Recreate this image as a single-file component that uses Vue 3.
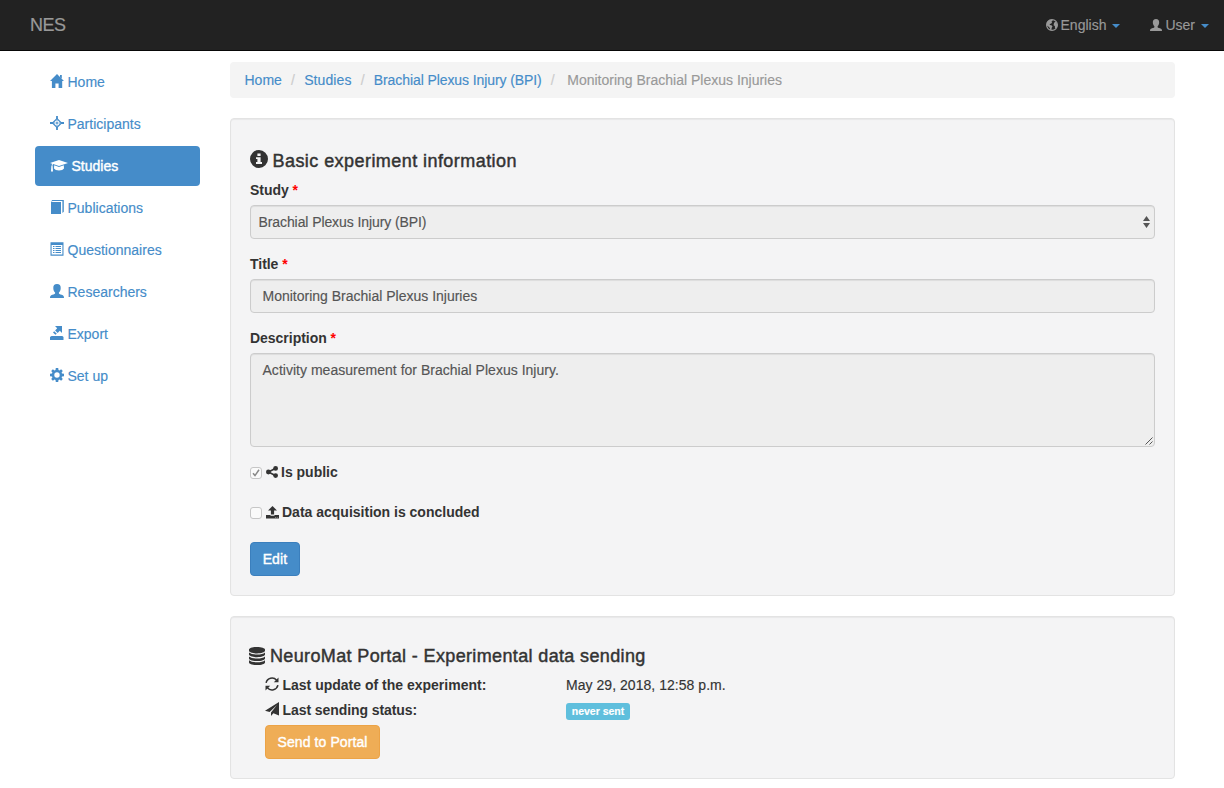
<script setup>
const nav = [
  { label: 'Home', icon: 'home' },
  { label: 'Participants', icon: 'target' },
  { label: 'Studies', icon: 'cap', active: true },
  { label: 'Publications', icon: 'book' },
  { label: 'Questionnaires', icon: 'list' },
  { label: 'Researchers', icon: 'user' },
  { label: 'Export', icon: 'export' },
  { label: 'Set up', icon: 'cog' },
]
</script>

<template>
  <svg class="defs" width="0" height="0" aria-hidden="true">
    <symbol id="home" viewBox="0 0 14 14"><path d="M7 0L14 7.1H12.2V14H8.6V9.4H5.4V14H1.9V7.1H0L7 0ZM10 1H11.8V4.6L10 2.9Z" /></symbol>
    <symbol id="target" viewBox="0 0 14 14"><path d="M6.1 0H7.9V3H6.1ZM6.1 11H7.9V14H6.1ZM0 6.1H3V7.9H0ZM11 6.1H14V7.9H11Z" /><path d="M7 2.6L11.4 7L7 11.4L2.6 7Z" fill="none" stroke="currentColor" stroke-width="1.3" /><path d="M7 4V5.6M7 8.4V10M4 7H5.6M8.4 7H10" fill="none" stroke="currentColor" stroke-width=".8" /><circle cx="7" cy="7" r="1" /></symbol>
    <symbol id="cap" viewBox="0 0 18 14"><path d="M9 1L18 4L9 7L3.1 5.1Q2.5 5.5 2.4 6.9Q3 7.3 2.7 8L3 12.5H1L1.3 8Q1 7.3 1.6 6.9Q1.7 5.5 2.1 4.7L0 4ZM4.2 6.3L9 8L13.8 6.3L14 9.6Q12.8 11.5 9 11.5T4 9.6Z" /></symbol>
    <symbol id="book" viewBox="0 0 14 14"><path d="M1 2H11V14H1ZM1 1.4L2.3 0H13.8V11.8L12.4 13V1.1H2.6L1.8 1.6Z" /></symbol>
    <symbol id="list" viewBox="0 0 14 14"><path d="M.5 .3H13.5V13.7H.5ZM1.6 3V12.6H12.4V3Z" fill-rule="evenodd" /><path d="M3 4.5H4.5M5.5 4.5H11M3 6.5H4.5M5.5 6.5H11M3 8.5H4.5M5.5 8.5H11M3 10.5H4.5M5.5 10.5H11" fill="none" stroke="currentColor" stroke-width="1" /></symbol>
    <symbol id="user" viewBox="0 0 14 14"><path d="M7 0C9.6 0 10.8 1.5 10.7 3.9C10.7 6 10 7.6 8.9 8.5V9.6C9.3 10.4 11.5 10.6 12.8 11.3C13.6 11.8 14 12.6 14 14H0C0 12.6 .4 11.8 1.2 11.3C2.5 10.6 4.7 10.4 5.1 9.6V8.5C4 7.6 3.3 6 3.3 3.9C3.2 1.5 4.4 0 7 0Z" /></symbol>
    <symbol id="export" viewBox="0 0 14 14"><path d="M5 0H12V7L9.8 4.8L7.7 6.9L5.1 4.4L7.2 2.2ZM4.2 5.2L6.8 7.8L5.4 8.8L3 6.6ZM1.5 9.9H12.3L13.5 11V14H0V11Z" /></symbol>
    <symbol id="cog" viewBox="0 0 14 14"><path fill-rule="evenodd" d="M5.8 0H8.2L8.5 2L9.5 2.4L11.1 1.2L12.8 2.9L11.6 4.5L12 5.5L14 5.8V8.2L12 8.5L11.6 9.5L12.8 11.1L11.1 12.8L9.5 11.6L8.5 12L8.2 14H5.8L5.5 12L4.5 11.6L2.9 12.8L1.2 11.1L2.4 9.5L2 8.5L0 8.2V5.8L2 5.5L2.4 4.5L1.2 2.9L2.9 1.2L4.5 2.4L5.5 2ZM7 4.3A2.7 2.7 0 1 0 7 9.7A2.7 2.7 0 1 0 7 4.3Z" /></symbol>
    <symbol id="globe" viewBox="0 0 14 14"><circle cx="7" cy="7" r="6.3" fill="none" stroke="currentColor" stroke-width="1.4" /><path d="M1 3.8L4 1L7.2 .8L7.8 2L6.3 3.2L7.2 4.3L5.6 5.4L4.1 5.8L4.8 6.9L6.8 7.5L7.6 8.8L6.7 10.2L6.3 12.8L5 13L4.4 10.6L3.1 8.9L1 7.5ZM9.4 4.5L11.4 3L13.2 6L12.9 8.9L11.5 11L10.5 10.8L10.3 8.3L8.8 7.2Z" /></symbol>
    <symbol id="info" viewBox="0 0 18 18"><path fill-rule="evenodd" d="M9 0A9 9 0 1 0 9 18A9 9 0 1 0 9 0ZM7.4 3.5H10.6V6H7.4ZM6 7.2H10.6V12H12V14H6V12H7.4V9.1H6Z" /></symbol>
    <symbol id="share" viewBox="0 0 12 12"><path d="M9.7 2.3L2.5 6L9.7 9.7" fill="none" stroke="currentColor" stroke-width="1.6" /><circle cx="9.6" cy="2.4" r="2.4" /><circle cx="2.4" cy="6" r="2.4" /><circle cx="9.6" cy="9.6" r="2.4" /></symbol>
    <symbol id="upload" viewBox="0 0 13 13"><path d="M6.5 0L11 4.5H8.1V8.5H4.9V4.5H2ZM0 9H4.1Q4.4 9.8 5.2 9.8H7.8Q8.6 9.8 8.9 9H13V12.6H0ZM9 11V11.6H9.8V11ZM10.8 11V11.6H11.6V11Z" fill-rule="evenodd" /></symbol>
    <symbol id="database" viewBox="0 0 16 18"><path d="M0 2.6C0 1.2 3.5 0 8 0S16 1.2 16 2.6V3.8C16 5.2 12.5 6.4 8 6.4S0 5.2 0 3.8ZM0 5.6Q2.4 7.6 8 7.6T16 5.6V7.6C16 9 12.5 10.2 8 10.2S0 9 0 7.6ZM0 9.4Q2.4 11.4 8 11.4T16 9.4V11.5C16 12.9 12.5 14.1 8 14.1S0 12.9 0 11.5ZM0 13.3Q2.4 15.3 8 15.3T16 13.3V15.4C16 16.8 12.5 18 8 18S0 16.8 0 15.4Z" /></symbol>
    <symbol id="refresh" viewBox="0 0 14 14"><path d="M1.1 5.8A6 6 0 0 1 11.6 3.2M12.9 8.2A6 6 0 0 1 2.4 10.8" fill="none" stroke="currentColor" stroke-width="1.5" /><path d="M13.5 .6V5.3H8.8ZM.5 13.4V8.7H5.2Z" /></symbol>
    <symbol id="plane" viewBox="0 0 14 14"><path d="M14 0V13.4L8.4 11.3L6 14V10.5L12 3L4.6 9.9L0 8.8Z" /></symbol>
  </svg>

  <header class="navbar">
    <span class="brand">NES</span>
    <div class="menu">
      <svg class="sm"><use href="#globe" /></svg><span>English</span><i class="caret" />
      <svg class="sm second"><use href="#user" /></svg><span>User</span><i class="caret" />
    </div>
  </header>

  <div class="page">
    <nav class="side">
      <a v-for="n in nav" :key="n.label" :class="{ active: n.active }">
        <svg class="ic" :class="{ wide: n.icon === 'cap' }"><use :href="'#' + n.icon" /></svg>
        <span>{{ n.label }}</span>
      </a>
    </nav>

    <main>
      <div class="crumbs">
        <a>Home</a><i>/</i><a>Studies</a><i>/</i><a class="long">Brachial Plexus Injury (BPI)</a><i class="last">/</i><span>Monitoring Brachial Plexus Injuries</span>
      </div>

      <section class="well basic">
        <h4><svg class="i18"><use href="#info" /></svg><span class="h-a">Basic experiment information</span></h4>
        <div class="lab">Study <b>*</b></div>
        <div class="field select">Brachial Plexus Injury (BPI)
          <svg class="arrows" viewBox="0 0 7 12"><path d="M0 5L3.5 0L7 5ZM0 7H7L3.5 12Z" /></svg>
        </div>
        <div class="lab">Title <b>*</b></div>
        <div class="field">Monitoring Brachial Plexus Injuries</div>
        <div class="lab">Description <b>*</b></div>
        <div class="field area">Activity measurement for Brachial Plexus Injury.
          <svg class="grip" viewBox="0 0 8 8"><path d="M.5 7.5L7.5 .5M4.5 7.5L7.5 4.5" /></svg>
        </div>
        <div class="check">
          <span class="box"><svg viewBox="0 0 10 10"><path d="M2 5.2L4 7.6L8 1.8" /></svg></span>
          <svg class="share"><use href="#share" /></svg><span>Is public</span>
        </div>
        <div class="check second">
          <span class="box" />
          <svg class="up"><use href="#upload" /></svg><span>Data acquisition is concluded</span>
        </div>
        <button class="btn edit">Edit</button>
      </section>

      <section class="well portal">
        <h4><svg class="db"><use href="#database" /></svg><span class="h-b">NeuroMat Portal - Experimental data sending</span></h4>
        <div class="row">
          <div class="key"><svg><use href="#refresh" /></svg><span>Last update of the experiment:</span></div>
          <span class="date">May 29, 2018, 12:58 p.m.</span>
        </div>
        <div class="row">
          <div class="key"><svg><use href="#plane" /></svg><span class="status">Last sending status:</span></div>
          <span class="badge">never sent</span>
        </div>
        <button class="btn send">Send to Portal</button>
      </section>
    </main>
  </div>
</template>

<style>
body { background: #fff; overflow: hidden; }
</style>

<style scoped>
* { box-sizing: border-box; }
.defs { position: absolute; }
svg { fill: currentColor; flex: none; display: block; }
.navbar, .page { font: 14px/20px "Liberation Sans", Arial, sans-serif; color: #333; }
.navbar { height: 51px; background: #222; border-bottom: 1px solid #080808; display: flex; justify-content: space-between; padding: 0 15px 0 30px; color: #999; }
.brand { font-size: 18px; line-height: 50px; letter-spacing: -.5px; -webkit-text-stroke: .2px #999; }
.menu { display: flex; align-items: center; -webkit-text-stroke: .15px #999; }
.menu svg { stroke: none; }
.sm { width: 12px; height: 12px; margin-right: 3px; }
.sm.second { margin-left: 30px; }
.caret { border: 4px solid transparent; border-top-color: #458cc9; border-bottom: 0; margin: 2px 0 0 6px; }
.page { display: flex; padding: 11px 49px 0 35px; -webkit-text-stroke: .15px; }
.page svg { stroke: none; }
.side { width: 165px; display: flex; flex-direction: column; gap: 2px; margin-right: 30px; flex: none; }
.side a { height: 40px; border-radius: 4px; padding: 0 15px; display: flex; align-items: center; color: #458cc9; }
.side .ic { width: 14px; height: 14px; margin: -2px 4px 0 -.5px; }
.side .wide { width: 18px; margin-top: 0; }
.side .active { background: #458cc9; color: #fff; -webkit-text-stroke: .4px #fff; }
main { width: 945px; }
.crumbs { height: 36px; border-radius: 4px; background: #f4f4f4; padding: 0 14.5px; display: flex; align-items: center; color: #999; }
.crumbs a { color: #458cc9; }
.crumbs a:nth-of-type(2) { letter-spacing: .1px; }
.crumbs .long { letter-spacing: -.09px; }
.crumbs i { font-style: normal; color: #ccc; padding: 0 9.2px; }
.crumbs .last { padding-right: 12.5px; }
.well { margin-top: 20px; background: #f4f4f5; border: 1px solid #e3e3e3; border-radius: 4px; box-shadow: inset 0 1px 1px rgba(0, 0, 0, .05); padding: 31px 19px 0; }
.basic { height: 478px; }
.portal { height: 163px; padding-top: 29px; }
h4 { margin: 0; font-size: 18px; line-height: 20px; font-weight: 400; display: flex; align-items: center; -webkit-text-stroke: .45px #333; }
.h-a { letter-spacing: .44px; position: relative; top: 1px; }
.h-b { letter-spacing: .36px; }
.i18 { width: 18px; height: 18px; margin: -3px 5px 0 -.5px; }
.db { width: 16px; height: 18px; margin: 0 5px 0 -1px; }
.lab { font-weight: 700; height: 20px; margin: 10px 0 5px; -webkit-text-stroke: 0; letter-spacing: -.03px; }
.lab b { color: red; font-weight: 700; }
.field { position: relative; height: 34px; border: 1px solid #ccc; border-radius: 4px; background: #eee; box-shadow: inset 0 1px 1px rgba(0, 0, 0, .075); padding: 6px 11.5px; color: #555; margin-bottom: 15px; }
.field + .lab { margin-top: 0; }
.select { padding-left: 7.5px; letter-spacing: -.09px; }
.arrows { position: absolute; right: 4px; top: 10px; width: 7px; height: 12px; }
.area { height: 94px; letter-spacing: .02px; }
.grip { position: absolute; right: 1px; bottom: 1px; width: 8px; height: 8px; }
.grip path { stroke: #555; fill: none; }
.check { height: 20px; display: flex; align-items: center; font-weight: 700; -webkit-text-stroke: 0; }
.check.second { margin-top: 20px; }
.box { width: 12px; height: 12px; border: 1px solid #c6c6c6; border-radius: 3px; background: #fafafa; margin: 2px 3.5px 0 0; }
.box path { fill: none; stroke: #888; stroke-width: 1.5; }
.share { width: 12px; height: 12px; margin-right: 3.5px; }
.up { width: 13px; height: 13px; margin-right: 3.5px; }
.btn { display: block; font: inherit; height: 34px; border-radius: 4px; color: #fff; padding: 0; border: 1px solid; -webkit-text-stroke: .4px #fff; white-space: nowrap; }
.edit { width: 50px; margin-top: 20px; background: #458cc9; border-color: #3b7fbd; letter-spacing: .15px; }
.send { width: 115px; margin: 5px 0 0 15px; background: #efad56; border-color: #eca346; letter-spacing: .1px; }
.row { display: flex; margin: 9px 0 0 15px; height: 20px; }
.row + .row { margin-top: 5px; }
.key { width: 301px; display: flex; font-weight: 700; -webkit-text-stroke: 0; }
.key svg { width: 14px; height: 14px; margin: 2px 3.5px 0 0; }
.status { letter-spacing: -.08px; }
.date { letter-spacing: .04px; }
.badge { height: 17px; width: 64px; margin-top: 3px; border-radius: 3px; background: #5fbfdd; color: #fff; font-size: 10.5px; line-height: 17px; font-weight: 700; text-align: center; }
</style>
